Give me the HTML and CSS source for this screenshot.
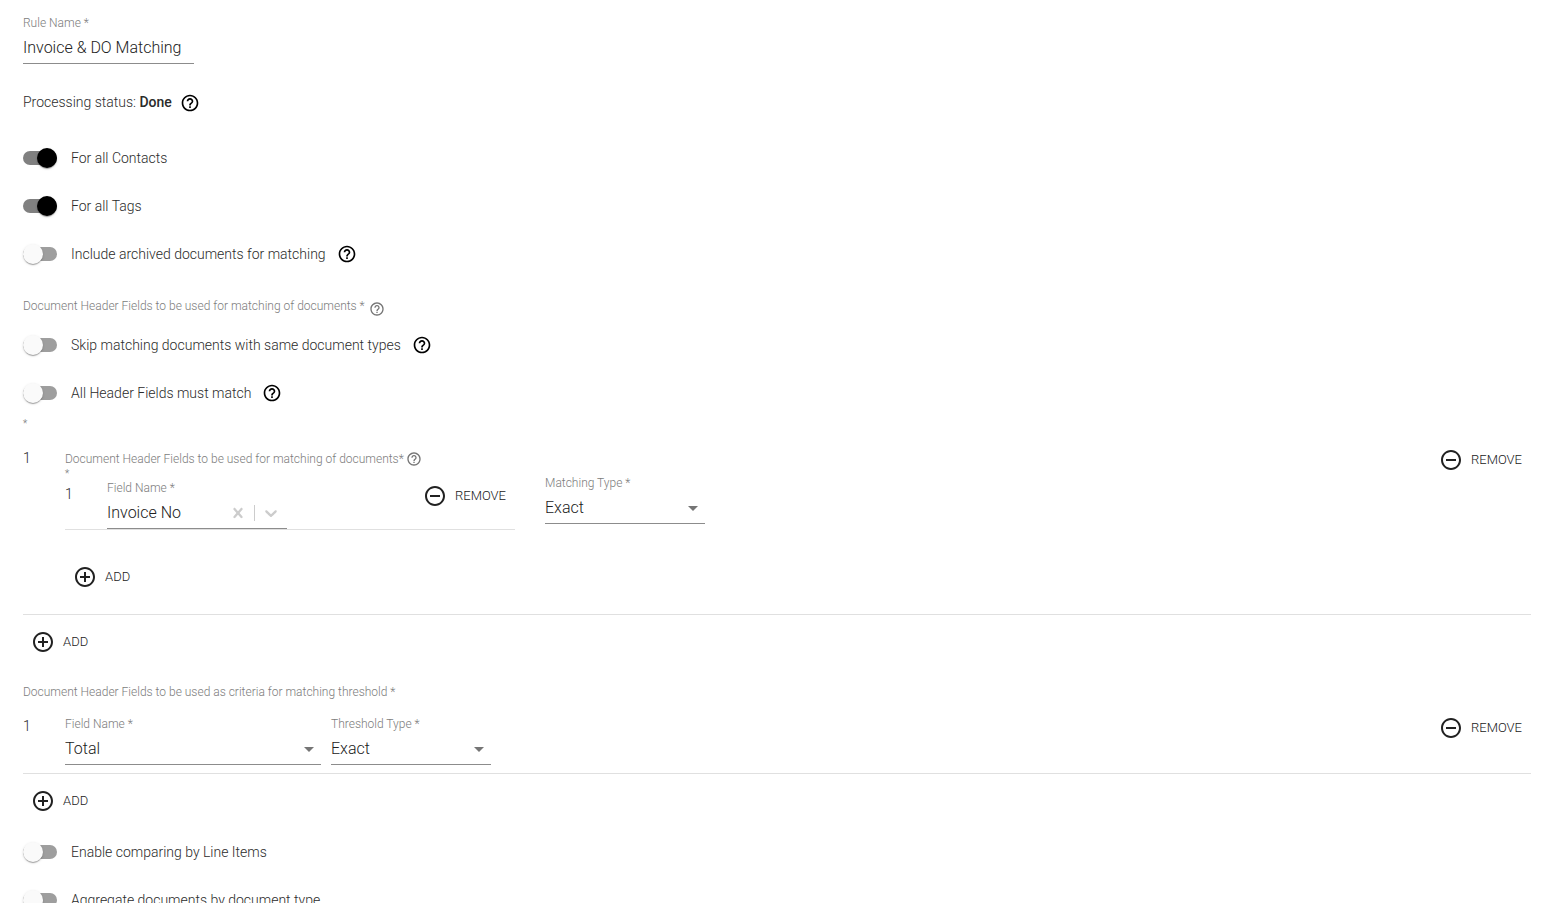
FILE: index.html
```html
<!DOCTYPE html>
<html lang="en">
<head>
<meta charset="utf-8">
<title>Matching rule</title>
<link rel="stylesheet" href="styles.css">
</head>
<body>
<svg class="sprite" aria-hidden="true">
  <symbol id="help" viewBox="0 0 24 24"><path d="M11 18h2v-2h-2v2zm1-16C6.480 2 2 6.480 2 12s4.480 10 10 10 10-4.480 10-10S17.520 2 12 2zm0 18c-4.410 0-8-3.590-8-8s3.590-8 8-8 8 3.590 8 8-3.590 8-8 8zm0-14c-2.210 0-4 1.790-4 4h2c0-1.100.9-2 2-2s2 .9 2 2c0 2-3 1.750-3 5h2c0-2.250 3-2.500 3-5 0-2.210-1.790-4-4-4z"/></symbol>
  <symbol id="plus" viewBox="0 0 24 24"><path d="M13 7h-2v4H7v2h4v4h2v-4h4v-2h-4V7zm-1-5C6.480 2 2 6.480 2 12s4.480 10 10 10 10-4.480 10-10S17.520 2 12 2zm0 18c-4.410 0-8-3.590-8-8s3.590-8 8-8 8 3.590 8 8-3.590 8-8 8z"/></symbol>
  <symbol id="minus" viewBox="0 0 24 24"><path d="M7 11v2h10v-2H7zm5-9C6.480 2 2 6.480 2 12s4.480 10 10 10 10-4.480 10-10S17.520 2 12 2zm0 18c-4.410 0-8-3.590-8-8s3.590-8 8-8 8 3.590 8 8-3.590 8-8 8z"/></symbol>
  <symbol id="caret" viewBox="0 0 24 24"><path d="M7 10l5 5 5-5z"/></symbol>
  <symbol id="clear" viewBox="0 0 20 20"><path d="M14.348 14.849c-0.469 0.469-1.229 0.469-1.697 0l-2.651-3.030-2.651 3.029c-0.469 0.469-1.229 0.469-1.697 0-0.469-0.469-0.469-1.229 0-1.697l2.758-3.150-2.759-3.152c-0.469-0.469-0.469-1.228 0-1.697s1.228-0.469 1.697 0l2.652 3.031 2.651-3.031c0.469-0.469 1.228-0.469 1.697 0s0.469 1.229 0 1.697l-2.758 3.152 2.758 3.150c0.469 0.469 0.469 1.229 0 1.698z"/></symbol>
  <symbol id="chevron" viewBox="0 0 20 20"><path d="M4.516 7.548c0.436-0.446 1.043-0.481 1.576 0l3.908 3.747 3.908-3.747c0.533-0.481 1.141-0.446 1.574 0 0.436 0.445 0.408 1.197 0 1.615-0.406 0.418-4.695 4.502-4.695 4.502-0.217 0.223-0.502 0.335-0.787 0.335s-0.570-0.112-0.789-0.335c0 0-4.287-4.084-4.695-4.502s-0.436-1.170 0-1.615z"/></symbol>
</svg>

<form class="rule-form">
  <div class="field rule-name">
    <label class="caption" for="rule-name">Rule Name *</label>
    <input class="control" id="rule-name" type="text" value="Invoice &amp; DO Matching">
  </div>

  <p class="status">Processing status: <strong>Done</strong><svg class="help"><use href="#help"/></svg></p>

  <div class="switches">
    <div class="switch-row"><input class="switch" id="contacts" type="checkbox" checked><label for="contacts">For all Contacts</label></div>
    <div class="switch-row"><input class="switch" id="tags" type="checkbox" checked><label for="tags">For all Tags</label></div>
    <div class="switch-row"><input class="switch" id="archived" type="checkbox"><label for="archived">Include archived documents for matching</label><svg class="help"><use href="#help"/></svg></div>
  </div>

  <div class="section-title"><span class="caption">Document Header Fields to be used for matching of documents *</span><svg class="help small"><use href="#help"/></svg></div>
  <div class="switch-row"><input class="switch" id="skip" type="checkbox"><label for="skip">Skip matching documents with same document types</label><svg class="help"><use href="#help"/></svg></div>
  <div class="switch-row"><input class="switch" id="all-match" type="checkbox"><label for="all-match">All Header Fields must match</label><svg class="help"><use href="#help"/></svg></div>
  <div class="marker">*</div>

  <div class="item group">
    <span class="number">1</span>
    <div class="nested">
      <div class="nested-title"><span class="caption">Document Header Fields to be used for matching of documents*</span><svg class="help small"><use href="#help"/></svg></div>
      <div class="marker short">*</div>
      <div class="item inner">
        <span class="number">1</span>
        <div class="field combo-field">
          <label class="caption" for="field-name">Field Name *</label>
          <div class="combo">
            <input class="combo-input" id="field-name" type="text" value="Invoice No">
            <button class="indicator" type="button" aria-label="Clear"><svg><use href="#clear"/></svg></button>
            <span class="separator"></span>
            <button class="indicator" type="button" aria-label="Open"><svg><use href="#chevron"/></svg></button>
          </div>
        </div>
        <button class="action end" type="button"><svg><use href="#minus"/></svg>REMOVE</button>
      </div>
      <button class="action nested-add" type="button"><svg><use href="#plus"/></svg>ADD</button>
    </div>
    <div class="field narrow matching">
      <label class="caption" for="matching-type">Matching Type *</label>
      <div class="select"><select class="control" id="matching-type"><option>Exact</option></select><svg><use href="#caret"/></svg></div>
    </div>
    <button class="action end" type="button"><svg><use href="#minus"/></svg>REMOVE</button>
  </div>
  <button class="action add" type="button"><svg><use href="#plus"/></svg>ADD</button>

  <div class="threshold-title caption">Document Header Fields to be used as criteria for matching threshold *</div>
  <div class="item threshold">
    <span class="number">1</span>
    <div class="field wide">
      <label class="caption" for="threshold-field">Field Name *</label>
      <div class="select"><select class="control" id="threshold-field"><option>Total</option></select><svg><use href="#caret"/></svg></div>
    </div>
    <div class="field narrow">
      <label class="caption" for="threshold-type">Threshold Type *</label>
      <div class="select"><select class="control" id="threshold-type"><option>Exact</option></select><svg><use href="#caret"/></svg></div>
    </div>
    <button class="action end" type="button"><svg><use href="#minus"/></svg>REMOVE</button>
  </div>
  <button class="action add" type="button"><svg><use href="#plus"/></svg>ADD</button>

  <div class="options">
    <div class="switch-row"><input class="switch" id="line-items" type="checkbox"><label for="line-items">Enable comparing by Line Items</label></div>
    <div class="switch-row"><input class="switch" id="aggregate" type="checkbox"><label for="aggregate">Aggregate documents by document type</label></div>
  </div>
</form>
</body>
</html>
```
FILE: styles.css
```css
* { box-sizing: border-box; }

body {
  margin: 0;
  height: 100vh;
  overflow: hidden;
  background: #fff;
  color: #2b2b2b;
  font-family: Roboto, "Liberation Sans", sans-serif;
  font-size: 14px;
  font-weight: 300;
  line-height: 20px;
}

.sprite { display: none; }
svg { fill: currentColor; flex: none; }

.rule-form { padding: 15px 20px 0 23px; }

.caption {
  color: #7c7c7c;
  font-size: 12px;
  line-height: 16px;
  white-space: nowrap;
}

.field { display: flex; flex-direction: column; flex: none; }
.rule-name { width: 171px; }
.wide { width: 256px; }
.narrow { width: 160px; }

.control {
  width: 100%;
  height: 33px;
  padding: 0;
  border: 0;
  border-bottom: 1px solid #8c8c8c;
  border-radius: 0;
  background: transparent;
  color: #212121;
  font: inherit;
  font-size: 16px;
  appearance: none;
  outline: 0;
}

.select { position: relative; }
.select .control { padding-top: 2px; }
.select svg {
  position: absolute;
  top: 5px;
  right: 0;
  width: 24px;
  height: 24px;
  color: #757575;
  pointer-events: none;
}

.status {
  display: flex;
  align-items: center;
  height: 24px;
  margin: 26px 0 20px;
  white-space: pre;
}
.status strong { font-weight: 500; }
.status .help { margin: 2px 0 0 8px; }

.help { width: 20px; height: 20px; color: #000; }
.help.small { width: 16px; height: 16px; color: #757575; }

.switch-row { display: flex; align-items: center; height: 48px; }
.switch-row label { margin-left: 14px; }
.switch-row .help { margin-left: 11px; }

.switch {
  position: relative;
  width: 34px;
  height: 14px;
  margin: 0;
  border-radius: 7px;
  background: #9e9e9e;
  appearance: none;
}
.switch::before {
  content: "";
  position: absolute;
  top: -3px;
  left: 0;
  width: 20px;
  height: 20px;
  border-radius: 50%;
  background: #fafafa;
  box-shadow: 0 2px 1px -1px rgba(0, 0, 0, .2), 0 1px 1px rgba(0, 0, 0, .14), 0 1px 3px rgba(0, 0, 0, .12);
}
.switch:checked { background: #808080; }
.switch:checked::before { left: 14px; background: #000; }

.section-title { display: flex; align-items: flex-end; gap: 4px; height: 23px; margin: 16px 0 4px; }
.section-title .caption { line-height: 22px; }

.marker { height: 12px; color: #757575; font-size: 10px; line-height: 14px; }
.marker.short { height: 8px; line-height: 8px; }

.item { display: flex; align-items: flex-start; border-bottom: 1px solid #e0e0e0; }
.number { flex: none; width: 42px; padding-top: 6px; }
.end { margin-left: auto; }

.group { margin-top: 13px; padding-bottom: 19px; }
.nested { width: 450px; padding-top: 6px; }
.nested-title { display: flex; align-items: center; gap: 2px; height: 22px; }
.inner { height: 52px; }
.combo-field { width: 180px; padding-top: 2px; }
.combo { display: flex; align-items: center; height: 33px; padding-top: 2px; border-bottom: 1px solid #8c8c8c; }
.combo-input {
  flex: 1;
  min-width: 0;
  padding: 0;
  border: 0;
  background: transparent;
  color: #212121;
  font: inherit;
  font-size: 16px;
  outline: 0;
}
.indicator { display: flex; padding: 6px; border: 0; background: transparent; color: #ccc; }
.indicator svg { width: 20px; height: 20px; }
.separator { width: 1px; height: 16px; background: #ccc; }
.matching { margin-left: 30px; padding-top: 33px; }

.action {
  display: flex;
  align-items: center;
  gap: 8px;
  height: 36px;
  padding: 0 8px;
  border: 0;
  background: transparent;
  color: #212121;
  font: inherit;
  font-size: 13px;
}
.action.end { min-width: 100px; margin-left: auto; }
.action svg { width: 24px; height: 24px; }
.nested-add { margin-top: 29px; }
.add { margin-top: 9px; }

.threshold-title { margin: 24px 0 10px; }
.threshold { padding-bottom: 8px; }
.threshold .field { margin-right: 10px; padding-top: 6px; }
.options { margin-top: 9px; }
```
